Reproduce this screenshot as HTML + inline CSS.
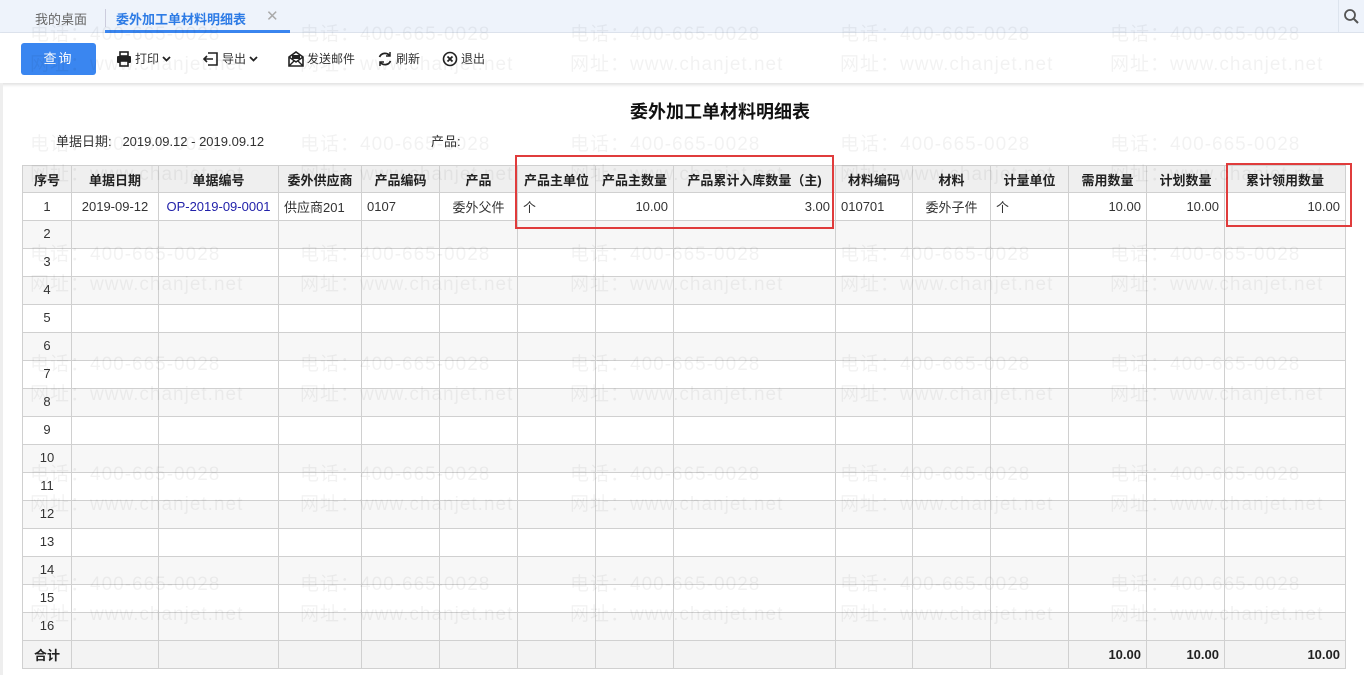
<!DOCTYPE html>
<html><head><meta charset="utf-8"><style>
*{margin:0;padding:0;box-sizing:border-box}
body{width:1364px;height:675px;overflow:hidden;background:#fff;font-family:"Liberation Sans","Noto Sans CJK SC",sans-serif;font-size:13px;color:#333;position:relative}
.tabs{position:absolute;left:0;top:0;width:1364px;height:33px;background:#eef3fb;border-bottom:1px solid #dde4ee}
.tab1{position:absolute;left:35px;top:9px;color:#666;font-size:13px}
.sep{position:absolute;left:105px;top:9px;width:1px;height:18px;background:#ccd}
.tab2{position:absolute;left:116px;top:9px;color:#2d7be5;font-weight:bold;font-size:13px}
.tabx{position:absolute;left:266px;top:7px;color:#aaa;font-size:15px}
.tabline{position:absolute;left:105px;top:30px;width:185px;height:3px;background:#3a86f0}
.srch{position:absolute;left:1338px;top:0;width:26px;height:33px;border-left:1px solid #dde4ee}
.tool{position:absolute;left:0;top:33px;width:1364px;height:50px;background:#fff;box-shadow:0 2px 3px rgba(0,0,0,.12)}
.btn{position:absolute;left:21px;top:10px;width:75px;height:32px;background:#3a86f0;color:#fff;border-radius:3px;text-align:center;line-height:32px;font-size:13px;letter-spacing:2px}
.ti{position:absolute;top:17px;font-size:12px;color:#333;display:flex;align-items:center;gap:3px}
.title{position:absolute;left:0;width:1440px;top:98px;text-align:center;font-size:18px;font-weight:bold;color:#111}
.meta{position:absolute;top:131px;font-size:13px;color:#333}
table{position:absolute;left:22px;top:165px;border-collapse:collapse;table-layout:fixed;width:1323px}
td,th{border:1px solid #d0d0d0;height:28px;padding:0 5px;font-size:13px;white-space:nowrap;overflow:hidden}
th{background:#efefef;font-weight:bold;color:#222;height:27px;text-align:center}
tr.g td{background:#f7f7f7}
td.c{text-align:center}
td.r{text-align:right}
td.n{text-align:center;vertical-align:top;padding-top:5px}
tr.f td{background:#f3f3f3;font-weight:bold;color:#222}
.rb{position:absolute;border:2px solid #e03c3c}
.wm{position:absolute;color:rgba(0,0,0,.05);font-size:19px;letter-spacing:1px;white-space:nowrap;pointer-events:none}
.lb{position:absolute;left:0;top:83px;width:3px;height:592px;background:#eee}
</style></head><body>
<div class="tabs">
<span class="tab1">我的桌面</span><span class="sep"></span>
<span class="tab2">委外加工单材料明细表</span><span class="tabx">✕</span>
<div class="tabline"></div>
<div class="srch"><svg width="26" height="33"><circle cx="11" cy="15" r="5" fill="none" stroke="#555" stroke-width="1.8"/><line x1="15" y1="19" x2="19" y2="23" stroke="#555" stroke-width="2"/></svg></div>
</div>
<div class="tool">
<div class="btn">查询</div>
<div class="ti" style="left:116px"><svg width="16" height="16"><rect x="4" y="1" width="8" height="4" fill="none" stroke="#222" stroke-width="1.6"/><rect x="1" y="5" width="14" height="7" rx="1" fill="#222"/><rect x="4" y="10" width="8" height="5" fill="#fff" stroke="#222" stroke-width="1.6"/></svg>打印<svg width="9" height="8"><path d="M1 2l3.5 3.5L8 2" fill="none" stroke="#222" stroke-width="1.8"/></svg></div>
<div class="ti" style="left:203px"><svg width="16" height="16"><path d="M5 2h9v12H5" fill="none" stroke="#222" stroke-width="1.6"/><path d="M10 8H1M4 5L1 8l3 3" fill="none" stroke="#222" stroke-width="1.6"/></svg>导出<svg width="9" height="8"><path d="M1 2l3.5 3.5L8 2" fill="none" stroke="#222" stroke-width="1.8"/></svg></div>
<div class="ti" style="left:288px"><svg width="16" height="16"><path d="M1 6l7-5 7 5v9H1z" fill="none" stroke="#222" stroke-width="1.6"/><path d="M1 6l7 5 7-5M1 15l5-5M15 15l-5-5" fill="none" stroke="#222" stroke-width="1.4"/><rect x="4" y="4" width="8" height="4" fill="#222"/></svg>发送邮件</div>
<div class="ti" style="left:377px"><svg width="16" height="16"><path d="M13 5A6 6 0 0 0 2.5 6M3 11a6 6 0 0 0 10.5-1" fill="none" stroke="#222" stroke-width="1.7"/><path d="M13 1v4h-4M3 15v-4h4" fill="none" stroke="#222" stroke-width="1.5"/></svg>刷新</div>
<div class="ti" style="left:442px"><svg width="16" height="16"><circle cx="8" cy="8" r="6.5" fill="none" stroke="#222" stroke-width="1.6"/><path d="M5.5 5.5l5 5M10.5 5.5l-5 5" stroke="#222" stroke-width="1.8"/></svg>退出</div>
</div>
<div class="lb"></div>
<div class="title">委外加工单材料明细表</div>
<div class="meta" style="left:56px">单据日期:&nbsp;&nbsp; 2019.09.12 - 2019.09.12</div>
<div class="meta" style="left:431px">产品:</div>
<table>
<colgroup><col style="width:49px"><col style="width:87px"><col style="width:120px"><col style="width:83px"><col style="width:78px"><col style="width:78px"><col style="width:78px"><col style="width:78px"><col style="width:162px"><col style="width:77px"><col style="width:78px"><col style="width:78px"><col style="width:78px"><col style="width:78px"><col style="width:121px"></colgroup>
<tr><th>序号</th><th>单据日期</th><th>单据编号</th><th>委外供应商</th><th>产品编码</th><th>产品</th><th>产品主单位</th><th>产品主数量</th><th>产品累计入库数量（主)</th><th>材料编码</th><th>材料</th><th>计量单位</th><th>需用数量</th><th>计划数量</th><th>累计领用数量</th></tr>
<tr><td class="c">1</td><td class="c">2019-09-12</td><td class="c" style="color:#2222aa">OP-2019-09-0001</td><td>供应商201</td><td>0107</td><td class="c">委外父件</td><td>个</td><td class="r">10.00</td><td class="r">3.00</td><td>010701</td><td class="c">委外子件</td><td>个</td><td class="r">10.00</td><td class="r">10.00</td><td class="r">10.00</td></tr>
<tr class="g"><td class="n">2</td><td></td><td></td><td></td><td></td><td></td><td></td><td></td><td></td><td></td><td></td><td></td><td></td><td></td><td></td></tr>
<tr><td class="n">3</td><td></td><td></td><td></td><td></td><td></td><td></td><td></td><td></td><td></td><td></td><td></td><td></td><td></td><td></td></tr>
<tr class="g"><td class="n">4</td><td></td><td></td><td></td><td></td><td></td><td></td><td></td><td></td><td></td><td></td><td></td><td></td><td></td><td></td></tr>
<tr><td class="n">5</td><td></td><td></td><td></td><td></td><td></td><td></td><td></td><td></td><td></td><td></td><td></td><td></td><td></td><td></td></tr>
<tr class="g"><td class="n">6</td><td></td><td></td><td></td><td></td><td></td><td></td><td></td><td></td><td></td><td></td><td></td><td></td><td></td><td></td></tr>
<tr><td class="n">7</td><td></td><td></td><td></td><td></td><td></td><td></td><td></td><td></td><td></td><td></td><td></td><td></td><td></td><td></td></tr>
<tr class="g"><td class="n">8</td><td></td><td></td><td></td><td></td><td></td><td></td><td></td><td></td><td></td><td></td><td></td><td></td><td></td><td></td></tr>
<tr><td class="n">9</td><td></td><td></td><td></td><td></td><td></td><td></td><td></td><td></td><td></td><td></td><td></td><td></td><td></td><td></td></tr>
<tr class="g"><td class="n">10</td><td></td><td></td><td></td><td></td><td></td><td></td><td></td><td></td><td></td><td></td><td></td><td></td><td></td><td></td></tr>
<tr><td class="n">11</td><td></td><td></td><td></td><td></td><td></td><td></td><td></td><td></td><td></td><td></td><td></td><td></td><td></td><td></td></tr>
<tr class="g"><td class="n">12</td><td></td><td></td><td></td><td></td><td></td><td></td><td></td><td></td><td></td><td></td><td></td><td></td><td></td><td></td></tr>
<tr><td class="n">13</td><td></td><td></td><td></td><td></td><td></td><td></td><td></td><td></td><td></td><td></td><td></td><td></td><td></td><td></td></tr>
<tr class="g"><td class="n">14</td><td></td><td></td><td></td><td></td><td></td><td></td><td></td><td></td><td></td><td></td><td></td><td></td><td></td><td></td></tr>
<tr><td class="n">15</td><td></td><td></td><td></td><td></td><td></td><td></td><td></td><td></td><td></td><td></td><td></td><td></td><td></td><td></td></tr>
<tr class="g"><td class="n">16</td><td></td><td></td><td></td><td></td><td></td><td></td><td></td><td></td><td></td><td></td><td></td><td></td><td></td><td></td></tr>
<tr class="f"><td class="c">合计</td><td></td><td></td><td></td><td></td><td></td><td></td><td></td><td></td><td></td><td></td><td></td><td class="r">10.00</td><td class="r">10.00</td><td class="r">10.00</td></tr>
</table>
<div class="rb" style="left:515px;top:155px;width:319px;height:74px"></div>
<div class="rb" style="left:1226px;top:163px;width:126px;height:64px"></div>
<div class="wm" style="left:30px;top:19px">电话：400-665-0028</div><div class="wm" style="left:30px;top:49px">网址：www.chanjet.net</div>
<div class="wm" style="left:300px;top:19px">电话：400-665-0028</div><div class="wm" style="left:300px;top:49px">网址：www.chanjet.net</div>
<div class="wm" style="left:570px;top:19px">电话：400-665-0028</div><div class="wm" style="left:570px;top:49px">网址：www.chanjet.net</div>
<div class="wm" style="left:840px;top:19px">电话：400-665-0028</div><div class="wm" style="left:840px;top:49px">网址：www.chanjet.net</div>
<div class="wm" style="left:1110px;top:19px">电话：400-665-0028</div><div class="wm" style="left:1110px;top:49px">网址：www.chanjet.net</div>
<div class="wm" style="left:30px;top:129px">电话：400-665-0028</div><div class="wm" style="left:30px;top:159px">网址：www.chanjet.net</div>
<div class="wm" style="left:300px;top:129px">电话：400-665-0028</div><div class="wm" style="left:300px;top:159px">网址：www.chanjet.net</div>
<div class="wm" style="left:570px;top:129px">电话：400-665-0028</div><div class="wm" style="left:570px;top:159px">网址：www.chanjet.net</div>
<div class="wm" style="left:840px;top:129px">电话：400-665-0028</div><div class="wm" style="left:840px;top:159px">网址：www.chanjet.net</div>
<div class="wm" style="left:1110px;top:129px">电话：400-665-0028</div><div class="wm" style="left:1110px;top:159px">网址：www.chanjet.net</div>
<div class="wm" style="left:30px;top:239px">电话：400-665-0028</div><div class="wm" style="left:30px;top:269px">网址：www.chanjet.net</div>
<div class="wm" style="left:300px;top:239px">电话：400-665-0028</div><div class="wm" style="left:300px;top:269px">网址：www.chanjet.net</div>
<div class="wm" style="left:570px;top:239px">电话：400-665-0028</div><div class="wm" style="left:570px;top:269px">网址：www.chanjet.net</div>
<div class="wm" style="left:840px;top:239px">电话：400-665-0028</div><div class="wm" style="left:840px;top:269px">网址：www.chanjet.net</div>
<div class="wm" style="left:1110px;top:239px">电话：400-665-0028</div><div class="wm" style="left:1110px;top:269px">网址：www.chanjet.net</div>
<div class="wm" style="left:30px;top:349px">电话：400-665-0028</div><div class="wm" style="left:30px;top:379px">网址：www.chanjet.net</div>
<div class="wm" style="left:300px;top:349px">电话：400-665-0028</div><div class="wm" style="left:300px;top:379px">网址：www.chanjet.net</div>
<div class="wm" style="left:570px;top:349px">电话：400-665-0028</div><div class="wm" style="left:570px;top:379px">网址：www.chanjet.net</div>
<div class="wm" style="left:840px;top:349px">电话：400-665-0028</div><div class="wm" style="left:840px;top:379px">网址：www.chanjet.net</div>
<div class="wm" style="left:1110px;top:349px">电话：400-665-0028</div><div class="wm" style="left:1110px;top:379px">网址：www.chanjet.net</div>
<div class="wm" style="left:30px;top:459px">电话：400-665-0028</div><div class="wm" style="left:30px;top:489px">网址：www.chanjet.net</div>
<div class="wm" style="left:300px;top:459px">电话：400-665-0028</div><div class="wm" style="left:300px;top:489px">网址：www.chanjet.net</div>
<div class="wm" style="left:570px;top:459px">电话：400-665-0028</div><div class="wm" style="left:570px;top:489px">网址：www.chanjet.net</div>
<div class="wm" style="left:840px;top:459px">电话：400-665-0028</div><div class="wm" style="left:840px;top:489px">网址：www.chanjet.net</div>
<div class="wm" style="left:1110px;top:459px">电话：400-665-0028</div><div class="wm" style="left:1110px;top:489px">网址：www.chanjet.net</div>
<div class="wm" style="left:30px;top:569px">电话：400-665-0028</div><div class="wm" style="left:30px;top:599px">网址：www.chanjet.net</div>
<div class="wm" style="left:300px;top:569px">电话：400-665-0028</div><div class="wm" style="left:300px;top:599px">网址：www.chanjet.net</div>
<div class="wm" style="left:570px;top:569px">电话：400-665-0028</div><div class="wm" style="left:570px;top:599px">网址：www.chanjet.net</div>
<div class="wm" style="left:840px;top:569px">电话：400-665-0028</div><div class="wm" style="left:840px;top:599px">网址：www.chanjet.net</div>
<div class="wm" style="left:1110px;top:569px">电话：400-665-0028</div><div class="wm" style="left:1110px;top:599px">网址：www.chanjet.net</div>
</body></html>
